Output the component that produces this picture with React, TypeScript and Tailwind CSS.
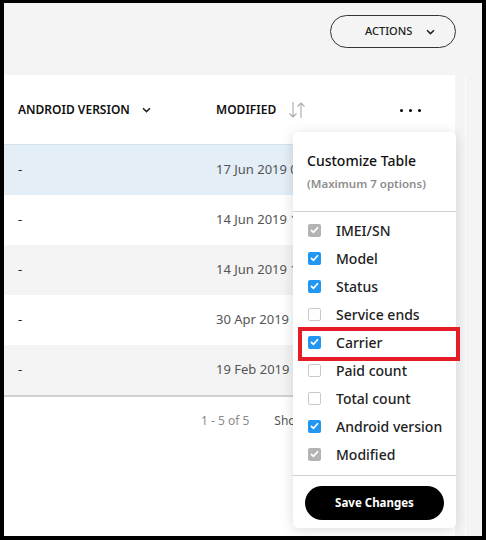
import React from "react";

const Chevron = ({ className = "" }: { className?: string }) => (
  <svg width="9" height="6" viewBox="0 0 9 6" className={className}>
    <path d="M1 1.2 L4.5 4.6 L8 1.2" fill="none" stroke="#222" strokeWidth="1.5" />
  </svg>
);

const SortIcon = () => (
  <svg width="18" height="18" viewBox="0 0 18 18">
    <path d="M5 1 V16 M1.5 12.5 L5 16 L8.5 12.5" fill="none" stroke="#aaa" strokeWidth="1.1" />
    <path d="M13 17 V2 M9.5 5.5 L13 2 L16.5 5.5" fill="none" stroke="#aaa" strokeWidth="1.1" />
  </svg>
);

type Item = { label: string; state: "on" | "off" | "disabled" };
const items: Item[] = [
  { label: "IMEI/SN", state: "disabled" },
  { label: "Model", state: "on" },
  { label: "Status", state: "on" },
  { label: "Service ends", state: "off" },
  { label: "Carrier", state: "on" },
  { label: "Paid count", state: "off" },
  { label: "Total count", state: "off" },
  { label: "Android version", state: "on" },
  { label: "Modified", state: "disabled" },
];

const Check = ({ state }: { state: Item["state"] }) => {
  if (state === "off")
    return <div className="w-[13px] h-[13px] rounded-[2px] border border-[#c9c9c9] bg-white" />;
  return (
    <div
      className={
        "w-[13px] h-[13px] rounded-[2px] flex items-center justify-center " +
        (state === "on" ? "bg-[#2196f3]" : "bg-[#b3b3b3]")
      }
    >
      <svg width="9" height="8" viewBox="0 0 9 8">
        <path d="M1 4 L3.5 6.3 L8 1.3" fill="none" stroke="white" strokeWidth="1.7" />
      </svg>
    </div>
  );
};

const rows = [
  { date: "17 Jun 2019 07:12", bg: "bg-[#e3eef7]" },
  { date: "14 Jun 2019 10:21", bg: "bg-white" },
  { date: "14 Jun 2019 10:05", bg: "bg-[#f4f4f4]" },
  { date: "30 Apr 2019 21:40", bg: "bg-white" },
  { date: "19 Feb 2019 14:33", bg: "bg-[#f4f4f4]" },
];

export default function App() {
  return (
    <div
      className="relative w-[486px] h-[540px] overflow-hidden bg-[#f4f4f4] border-black border-x-[4px] border-t-[3px] border-b-[4px]"
      style={{ fontFamily: '"Noto Sans", "Open Sans", sans-serif' }}
    >
      {/* top bar */}
      <div className="h-[72px] flex items-start justify-end pr-[26px] pt-[12px]">
        <button className="w-[126px] h-[33px] rounded-full border border-[#333] flex items-center pl-[34px] gap-[14px] text-[11px] font-medium text-[#222]">
          ACTIONS
          <Chevron />
        </button>
      </div>

      <div className="flex">
        <div className="w-[451px] bg-white">
          <div className="h-[70px] flex items-center border-b border-[#d3e2ee] text-[12px] font-semibold text-[#111] pt-[1px]">
            <div className="w-[212px] pl-[14px] flex items-center gap-[12px]">
              ANDROID VERSION
              <Chevron />
            </div>
            <div className="w-[184px] flex items-center gap-[12px]">
              MODIFIED
              <SortIcon />
            </div>
            <div className="flex items-center gap-[6px] pt-[1px]">
              <span className="w-[3px] h-[3px] bg-black rounded-full" />
              <span className="w-[3px] h-[3px] bg-black rounded-full" />
              <span className="w-[3px] h-[3px] bg-black rounded-full" />
            </div>
          </div>
          {rows.map((r, i) => (
            <div key={i} className={"h-[50px] flex items-center text-[13px] text-[#555] " + r.bg}>
              <div className="w-[212px] pl-[14px] text-[#222]">-</div>
              <div className="whitespace-nowrap">{r.date}</div>
            </div>
          ))}
        </div>
        <div className="w-[10px]" />
        <div className="w-px h-[470px] bg-[#fcfcfc]" />
      </div>

      <div className="absolute left-0 top-[392px] w-[451px] h-[2px] bg-[#d0d0d0]" />
      <div className="absolute left-[197px] top-[409px] flex gap-[25px] text-[12px] whitespace-nowrap">
        <span className="text-[#8a8a8a]">1 - 5 of 5</span>
        <span className="text-[#555]">Show 10</span>
      </div>

      {/* popup */}
      <div className="absolute left-[289px] top-[129px] w-[163px] h-[396px] bg-white rounded-[5px] shadow-[0_2px_14px_rgba(0,0,0,0.14)] flex flex-col">
        <div className="pl-[14px] pt-[19px] h-[79px]">
          <div className="text-[14px] font-medium text-[#111] leading-[20px]">Customize Table</div>
          <div className="text-[11.5px] font-semibold text-[#8d8d8d] leading-[16px] mt-[5px]">(Maximum 7 options)</div>
        </div>
        <div className="h-px bg-[#cfcfcf]" />
        <div className="flex flex-col pt-[4px] h-[263px]">
          {items.map((it) => (
            <div key={it.label} className="h-[28px] flex items-center pl-[15px] gap-[15px]">
              <Check state={it.state} />
              <span className="text-[14px] font-medium text-[#222]">{it.label}</span>
            </div>
          ))}
        </div>
        <div className="h-px bg-[#cfcfcf]" />
        <div className="pl-[12px] pt-[10px]">
          <button className="w-[139px] h-[34px] rounded-full bg-black text-white text-[11.5px] font-bold">
            Save Changes
          </button>
        </div>
      </div>

      {/* red highlight */}
      <div className="absolute left-[294px] top-[324px] w-[162px] h-[34px] border-[4px] border-[#e41d26]" />
    </div>
  );
}
